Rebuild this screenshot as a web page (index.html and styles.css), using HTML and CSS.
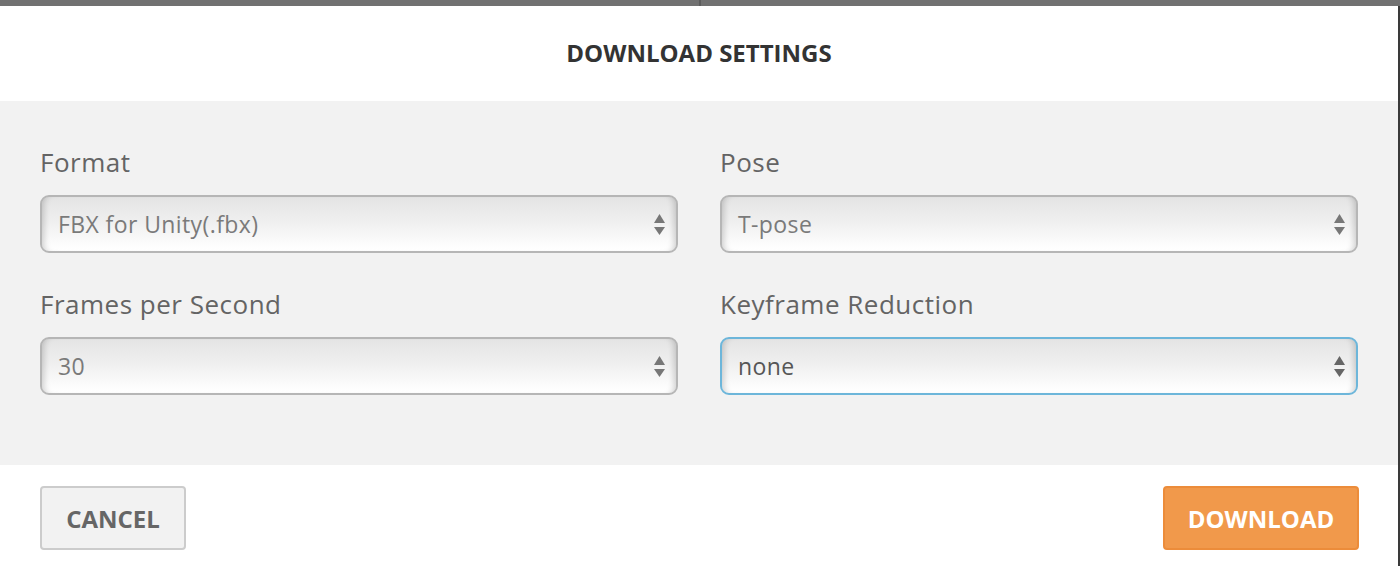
FILE: index.html
```html
<!DOCTYPE html>
<html>
<head>
<meta charset="utf-8">
<link rel="stylesheet" href="styles.css">
</head>
<body>
<div class="topbar"></div>
<div class="dialog">
  <div class="header"><h1 class="title">DOWNLOAD SETTINGS</h1></div>
  <div class="content">
    <div class="field">
      <div class="label">Format</div>
      <div class="select muted"><span>FBX for Unity(.fbx)</span>
        <svg class="arrows" width="11" height="21" viewBox="0 0 11 21"><polygon points="5.5,0 11,9 0,9" /><polygon points="0,13 11,13 5.5,21" /></svg>
      </div>
    </div>
    <div class="field">
      <div class="label">Pose</div>
      <div class="select muted"><span>T-pose</span>
        <svg class="arrows" width="11" height="21" viewBox="0 0 11 21"><polygon points="5.5,0 11,9 0,9" /><polygon points="0,13 11,13 5.5,21" /></svg>
      </div>
    </div>
    <div class="field">
      <div class="label">Frames per Second</div>
      <div class="select muted"><span>30</span>
        <svg class="arrows" width="11" height="21" viewBox="0 0 11 21"><polygon points="5.5,0 11,9 0,9" /><polygon points="0,13 11,13 5.5,21" /></svg>
      </div>
    </div>
    <div class="field">
      <div class="label">Keyframe Reduction</div>
      <div class="select focused"><span>none</span>
        <svg class="arrows" width="11" height="21" viewBox="0 0 11 21"><polygon points="5.5,0 11,9 0,9" /><polygon points="0,13 11,13 5.5,21" /></svg>
      </div>
    </div>
  </div>
  <div class="footer">
    <button class="btn btn-cancel">CANCEL</button>
    <button class="btn btn-download">DOWNLOAD</button>
  </div>
</div>
</body>
</html>
```
FILE: styles.css
```css
html, body {
  margin: 0;
  padding: 0;
  background: #ffffff;
  font-family: "Open Sans", "DejaVu Sans", sans-serif;
}

.topbar {
  height: 6px;
  background: linear-gradient(to right, #717171 0, #717171 699px, #5c5c5c 699px, #5c5c5c 701px, #717171 701px);
}

.dialog {
  width: 1398px;
  height: 560px;
  border-right: 2px solid #3a3a3a;
  display: flex;
  flex-direction: column;
  background: #fff;
}

.header {
  height: 95px;
  display: flex;
  align-items: center;
  justify-content: center;
}

.title {
  margin: 0;
  font-size: 24px;
  font-weight: 700;
  color: #333333;
  letter-spacing: 0;
  padding-bottom: 2px;
}

.content {
  height: 364px;
  box-sizing: border-box;
  background: #f2f2f2;
  padding: 43px 40px 0;
  display: grid;
  grid-template-columns: 638px 638px;
  column-gap: 42px;
  row-gap: 33px;
  align-content: start;
}

.field {
  display: flex;
  flex-direction: column;
}

.label {
  font-size: 26px;
  line-height: 36px;
  color: #646464;
  letter-spacing: 0.5px;
  margin-bottom: 15px;
}

.select {
  height: 58px;
  box-sizing: border-box;
  border: 2px solid #b6b6b6;
  border-radius: 9px;
  background: linear-gradient(to bottom, #e4e4e4 0%, #efefef 45%, #fdfdfd 90%, #ffffff 100%);
  box-shadow: inset 7px 0 6px -5px rgba(0,0,0,0.18), inset -7px 0 6px -5px rgba(0,0,0,0.18);
  display: flex;
  align-items: center;
  justify-content: space-between;
  padding: 0 11px 0 16px;
  font-size: 23px;
  letter-spacing: 0.4px;
  color: #7a7a7a;
}

.select.focused {
  border-color: #6db6da;
  color: #565656;
}

.arrows {
  fill: #777777;
  margin-top: 1px;
}

.select.focused .arrows {
  fill: #666666;
}

.footer {
  flex: 1;
  display: flex;
  justify-content: space-between;
  align-items: flex-start;
  padding: 21px 39px 0 40px;
}

.btn {
  height: 64px;
  box-sizing: border-box;
  border-radius: 4px;
  font-family: "Open Sans", "DejaVu Sans", sans-serif;
  font-size: 24px;
  font-weight: 700;
  padding: 0;
  cursor: pointer;
}

.btn-cancel {
  width: 146px;
  background: #f2f2f2;
  border: 2px solid #cccccc;
  color: #666666;
}

.btn-download {
  width: 196px;
  background: #f1994b;
  border: 2px solid #ec8c3a;
  color: #ffffff;
}
```
